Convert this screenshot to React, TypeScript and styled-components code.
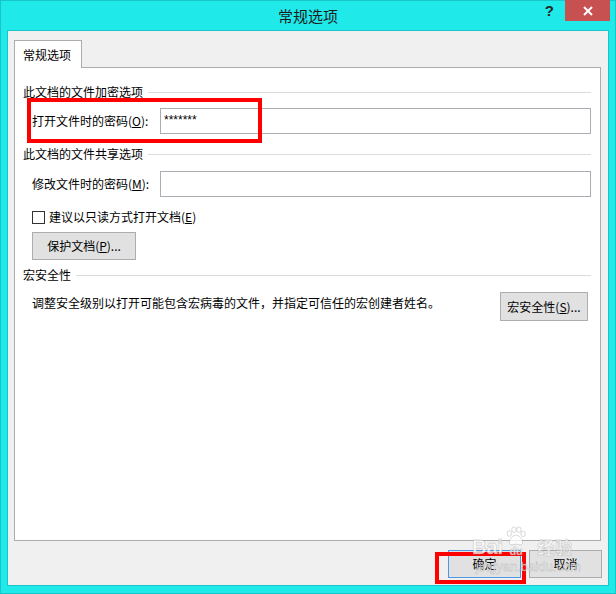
import styled, {createGlobalStyle} from 'styled-components';

const GlobalStyle = createGlobalStyle`
    html, body {
        margin: 0;
        padding: 0;
    }
    body {
        width: 616px;
        height: 594px;
        overflow: hidden;
        font-family: "Noto Sans CJK SC", "Noto Sans", sans-serif;
        color: #000;
    }
`;

const Page = styled.div`
    position: relative;
    width: 616px;
    height: 594px;
`;

const Window = styled.div`
    box-sizing: border-box;
    width: 100%;
    height: 100%;
    display: flex;
    flex-direction: column;
    background: #1fe9e9;
    border: 1px solid #18c6c9;
`;

const TitleBar = styled.div`
    height: 29px;
    display: grid;
    grid-template-columns: 1fr auto 1fr;
    align-items: start;
`;

const Title = styled.div`
    grid-column: 2;
    font-size: 15px;
    line-height: 29px;
    color: #1c1c1c;
`;

const Controls = styled.div`
    justify-self: end;
    display: flex;
    align-items: center;
    gap: 11px;
    margin-top: -1px;
    margin-right: 5px;
`;

const HelpMark = styled.span`
    font-family: "Liberation Sans", Arial, sans-serif;
    font-weight: bold;
    font-size: 15px;
    line-height: 21px;
    color: #262626;
`;

const CloseButton = styled.div`
    width: 45px;
    height: 21px;
    display: flex;
    align-items: center;
    justify-content: center;
    background: #c75050;
`;

const Client = styled.div`
    flex: 1;
    display: flex;
    flex-direction: column;
    margin: 0 6px 7px;
    padding: 9px 7px 7px 6px;
    background: #f0f0f0;
    border: 1px solid #18c6c9;
`;

const TabStrip = styled.div`
    display: flex;
`;

const Tab = styled.div`
    position: relative;
    z-index: 1;
    box-sizing: border-box;
    height: 28px;
    margin-bottom: -1px;
    padding: 0 10px 0 8px;
    font-size: 12px;
    line-height: 27px;
    background: #fff;
    border: 1px solid #acacac;
    border-bottom: none;
`;

const Panel = styled.div`
    flex: 1;
    display: flex;
    flex-direction: column;
    padding: 16px 9px 0 8px;
    background: #fff;
    border: 1px solid #acacac;
`;

const Heading = styled.div<{$gap: number}>`
    display: flex;
    align-items: center;
    gap: 5px;
    margin-top: ${p => p.$gap}px;
    height: 16px;
    font-size: 12px;
    line-height: 16px;
    &::after {
        content: '';
        flex: 1;
        height: 1px;
        background: #dcdcdc;
    }
`;

const FieldRow = styled.div<{$gap: number}>`
    display: flex;
    align-items: center;
    margin-top: ${p => p.$gap}px;
    padding-left: 9px;
`;

const Label = styled.label`
    width: 128px;
    font-size: 12px;
    line-height: 16px;
`;

const TextBox = styled.div`
    flex: 1;
    box-sizing: border-box;
    height: 26px;
    padding: 4px 3px 0;
    background: #fff;
    border: 1px solid #abadb3;
    font-family: "Liberation Sans", Arial, sans-serif;
    font-size: 12px;
    line-height: 14px;
`;

const CheckRow = styled.div`
    display: flex;
    align-items: center;
    gap: 4px;
    margin-top: 12px;
    padding-left: 9px;
    height: 16px;
    font-size: 12px;
    line-height: 16px;
`;

const CheckBox = styled.span`
    box-sizing: border-box;
    width: 13px;
    height: 13px;
    background: #fff;
    border: 1px solid #333;
`;

const Button = styled.button<{$width: number; $height?: number; $primary?: boolean}>`
    box-sizing: border-box;
    width: ${p => p.$width}px;
    height: ${p => p.$height ?? 28}px;
    padding: 0;
    font-family: "Noto Sans CJK SC", "Noto Sans", sans-serif;
    font-size: 12px;
    line-height: 16px;
    color: #000;
    background: #e1e1e1;
    border: 1px solid ${p => (p.$primary ? '#4d97e3' : '#adadad')};
`;

const ProtectButton = styled(Button)`
    margin-top: 7px;
    margin-left: 9px;
`;

const MacroRow = styled.div`
    display: flex;
    justify-content: space-between;
    align-items: flex-start;
    margin-top: 9px;
    padding: 0 3px 0 9px;
`;

const MacroText = styled.span`
    margin-top: 3px;
    font-size: 12px;
    line-height: 16px;
`;

const Footer = styled.div`
    display: flex;
    justify-content: flex-end;
    gap: 8px;
    margin-top: 9px;
    margin-right: -1px;
`;

const Highlight = styled.div<{$x: number; $y: number; $w: number; $h: number}>`
    position: absolute;
    left: ${p => p.$x}px;
    top: ${p => p.$y}px;
    width: ${p => p.$w}px;
    height: ${p => p.$h}px;
    box-sizing: border-box;
    border: 4px solid #ff0000;
    pointer-events: none;
`;

const Watermark = styled.div`
    position: absolute;
    left: 472px;
    top: 526px;
    display: flex;
    flex-direction: column;
    gap: 2px;
    color: rgba(255, 255, 255, 0.75);
    -webkit-text-stroke: 0.8px rgba(140, 140, 140, 0.35);
    pointer-events: none;
`;

const MarkLine = styled.div`
    display: flex;
    align-items: flex-end;
    gap: 2px;
`;

const MarkWord = styled.span`
    font-family: "Liberation Sans", Arial, sans-serif;
    font-weight: bold;
    font-size: 20px;
    line-height: 20px;
`;

const PawColumn = styled.div`
    display: flex;
    flex-direction: column;
    align-items: center;
`;

const MarkSmall = styled.span`
    font-family: "Liberation Sans", Arial, sans-serif;
    font-weight: bold;
    font-size: 11px;
    line-height: 11px;
`;

const MarkCjk = styled.span`
    margin-left: 8px;
    font-weight: bold;
    font-size: 17px;
    line-height: 20px;
    letter-spacing: 1px;
`;

const MarkUrl = styled.span`
    margin-left: 4px;
    font-family: "Liberation Sans", Arial, sans-serif;
    font-size: 13px;
    line-height: 15px;
`;

function Paw() {
    return (
        <svg width="22" height="20" viewBox="0 0 26 24">
            <g fill="rgba(255,255,255,0.75)" stroke="rgba(140,140,140,0.4)" strokeWidth="1">
                <ellipse cx="5" cy="9" rx="2.6" ry="3.4" />
                <ellipse cx="10.5" cy="4.5" rx="2.6" ry="3.4" />
                <ellipse cx="16.5" cy="4.5" rx="2.6" ry="3.4" />
                <ellipse cx="21.5" cy="9.5" rx="2.6" ry="3.4" />
                <path d="M13 11c-4 0-8 5-8 8.5 0 2.5 2 3.5 4 3 2-.4 2.6-.6 4-.6s2 .2 4 .6c2 .5 4-.5 4-3C21 16 17 11 13 11z" />
            </g>
        </svg>
    );
}

export default function App() {
    return (
        <Page>
            <GlobalStyle />
            <Window>
                <TitleBar>
                    <Title>常规选项</Title>
                    <Controls>
                        <HelpMark>?</HelpMark>
                        <CloseButton>
                            <svg width="10" height="10" viewBox="0 0 10 10">
                                <path d="M1 1L9 9M9 1L1 9" stroke="#fff" strokeWidth="2" />
                            </svg>
                        </CloseButton>
                    </Controls>
                </TitleBar>
                <Client>
                    <TabStrip>
                        <Tab>常规选项</Tab>
                    </TabStrip>
                    <Panel>
                        <Heading $gap={0}>此文档的文件加密选项</Heading>
                        <FieldRow $gap={8}>
                            <Label>打开文件时的密码(<u>O</u>):</Label>
                            <TextBox>*******</TextBox>
                        </FieldRow>
                        <Heading $gap={12}>此文档的文件共享选项</Heading>
                        <FieldRow $gap={9}>
                            <Label>修改文件时的密码(<u>M</u>):</Label>
                            <TextBox />
                        </FieldRow>
                        <CheckRow>
                            <CheckBox />
                            <span>建议以只读方式打开文档(<u>E</u>)</span>
                        </CheckRow>
                        <div>
                            <ProtectButton $width={104}>保护文档(<u>P</u>)...</ProtectButton>
                        </div>
                        <Heading $gap={7}>宏安全性</Heading>
                        <MacroRow>
                            <MacroText>调整安全级别以打开可能包含宏病毒的文件，并指定可信任的宏创建者姓名。</MacroText>
                            <Button $width={88} $height={29}>宏安全性(<u>S</u>)...</Button>
                        </MacroRow>
                    </Panel>
                    <Footer>
                        <Button $width={73} $primary>确定</Button>
                        <Button $width={73}>取消</Button>
                    </Footer>
                </Client>
            </Window>
            <Highlight $x={27} $y={98} $w={235} $h={45} />
            <Highlight $x={435} $y={552} $w={91} $h={32} />
            <Watermark>
                <MarkLine>
                    <MarkWord>Bai</MarkWord>
                    <PawColumn>
                        <Paw />
                        <MarkSmall>du</MarkSmall>
                    </PawColumn>
                    <MarkCjk>经验</MarkCjk>
                </MarkLine>
                <MarkUrl>jingyan.baidu.com</MarkUrl>
            </Watermark>
        </Page>
    );
}
